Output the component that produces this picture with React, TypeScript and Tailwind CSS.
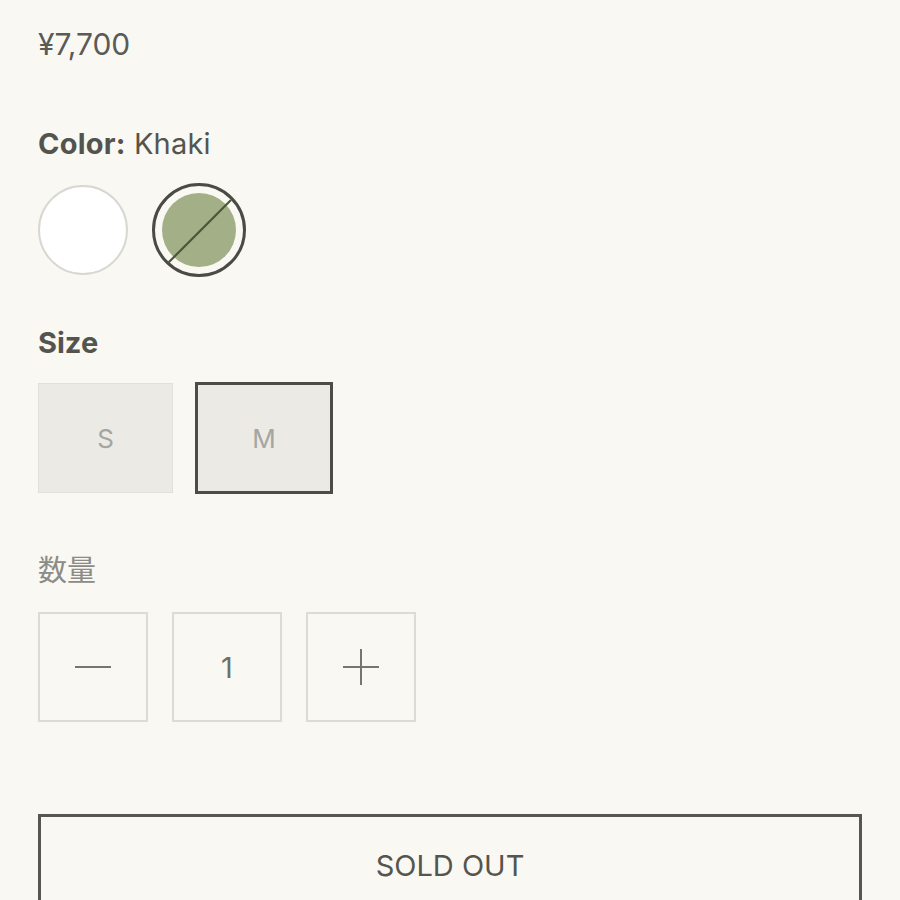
import React from "react";

export default function App() {
  const font = { fontFamily: "Inter, 'Noto Sans CJK JP', sans-serif" };
  return (
    <div className="min-h-[900px] w-[900px] bg-[#f9f8f2] overflow-hidden" style={font}>
      <div className="flex flex-col px-[38px] pt-[29px]">
        <div className="text-[30px] leading-none text-[#5a5a58]">¥7,700</div>

        <div className="mt-[70px] text-[29px] leading-none text-[#54544f] tracking-[0.2px]">
          <span className="font-bold">Color:</span> Khaki
        </div>

        <div className="mt-[25px] flex items-center gap-[24px] h-[94px]">
          <div className="w-[90px] h-[90px] rounded-full bg-white border-2 border-[#d8d7d1]" />
          <div className="relative w-[94px] h-[94px] rounded-full border-[3px] border-[#4b4b46] flex items-center justify-center">
            <div className="w-[74px] h-[74px] rounded-full bg-[#a2af87]" />
            <svg className="absolute inset-0" width="88" height="88" viewBox="0 0 88 88">
              <line x1="76" y1="14" x2="13" y2="77" stroke="#4a5838" strokeWidth="2.2" />
            </svg>
          </div>
        </div>

        <div className="mt-[51px] text-[29px] leading-none font-bold text-[#54544f]">Size</div>

        <div className="mt-[25px] flex items-center gap-[22px] h-[112px]">
          <div className="w-[135px] h-[110px] bg-[#ebeae5] border border-[#e1e0da] flex items-center justify-center text-[26px] text-[#a5a5a1]">
            S
          </div>
          <div className="w-[138px] h-[112px] bg-[#ebeae5] border-[3px] border-[#4d4d48] flex items-center justify-center text-[26px] text-[#a5a5a1]">
            M
          </div>
        </div>

        <div className="mt-[62px] text-[29px] leading-none text-[#8c8b86]">数量</div>

        <div className="mt-[27px] flex items-center gap-[24px]">
          <div className="w-[110px] h-[110px] border-2 border-[#dcdbd4] flex items-center justify-center">
            <div className="w-[36px] h-[2px] bg-[#76766f]" />
          </div>
          <div className="w-[110px] h-[110px] border-2 border-[#dcdbd4] flex items-center justify-center text-[29px] leading-none text-[#6e6e6a]">
            1
          </div>
          <div className="w-[110px] h-[110px] border-2 border-[#dcdbd4] flex items-center justify-center">
            <svg width="36" height="36" viewBox="0 0 36 36">
              <line x1="0" y1="18" x2="36" y2="18" stroke="#76766f" strokeWidth="2" />
              <line x1="18" y1="0" x2="18" y2="36" stroke="#76766f" strokeWidth="2" />
            </svg>
          </div>
        </div>

        <div className="mt-[92px] w-[824px] h-[104px] border-[3px] border-[#57574f] flex items-center justify-center text-[29px] text-[#55554f]">
          SOLD OUT
        </div>
      </div>
    </div>
  );
}
